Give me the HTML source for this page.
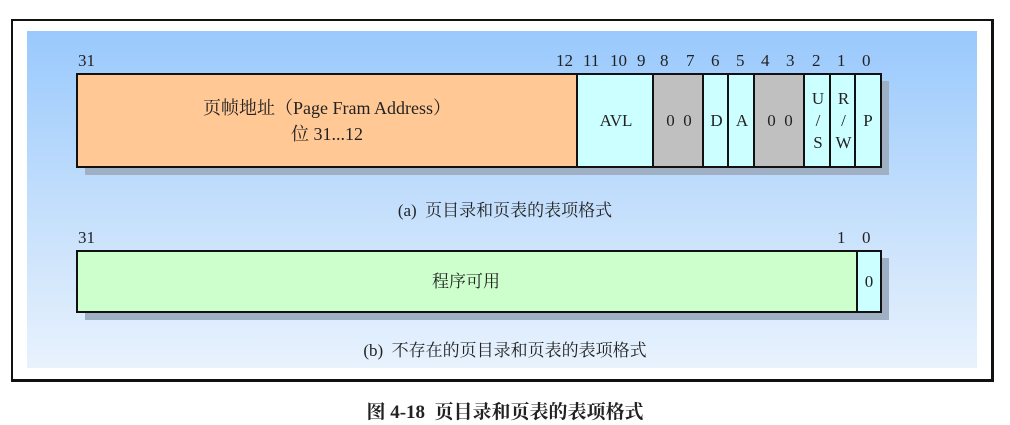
<!DOCTYPE html>
<html><head><meta charset="utf-8"><style>
body{margin:0;width:1010px;height:425px;background:#fff;position:relative;overflow:hidden;font-family:"Liberation Serif","Noto Serif CJK SC",serif;color:#222}
.a{position:absolute}
.outer{left:11px;top:19px;width:978px;height:358px;border:2px solid #111;border-right-width:3px;border-bottom-width:3px}
.panel{left:27px;top:31px;width:950px;height:337px;background:linear-gradient(#99c9fd,#c6e0fc 55%,#e8f2fd)}
.box{position:absolute;border:2px solid #111;box-sizing:border-box}
.sh{position:absolute;background:#9fb0c4}
.c{position:absolute;top:0;bottom:0;box-sizing:border-box;border-left:2px solid #111;display:flex;align-items:center;justify-content:center;font-size:17px;text-align:center;line-height:22px}
.n{position:absolute;font-size:17px;top:51px}
.cap{position:absolute;font-size:17px;width:100%;text-align:center;left:0}
</style></head><body>
<div class="a outer"></div>
<div class="a panel"></div>
<div class="sh" style="left:85px;top:81px;width:804px;height:94px"></div>
<div class="box" style="left:76px;top:73px;width:806px;height:95px;background:#ffc894">
 <div class="c" style="left:-2px;width:502px;border-left:none;font-size:18px;line-height:26px">页帧地址（Page Fram Address）<br>位 31...12</div>
 <div class="c" style="left:498px;width:78px;background:#ccffff">AVL</div>
 <div class="c" style="left:574px;width:52px;background:#c0c0c0">0&nbsp;&nbsp;0</div>
 <div class="c" style="left:624px;width:27px;background:#ccffff">D</div>
 <div class="c" style="left:649px;width:28px;background:#ccffff">A</div>
 <div class="c" style="left:675px;width:52px;background:#c0c0c0">0&nbsp;&nbsp;0</div>
 <div class="c" style="left:725px;width:28px;background:#ccffff">U<br>/<br>S</div>
 <div class="c" style="left:751px;width:27px;background:#ccffff">R<br>/<br>W</div>
 <div class="c" style="left:776px;width:26px;background:#ccffff">P</div>
</div>
<div class="n" style="left:78px">31</div>
<div class="n" style="left:556px">12</div><div class="n" style="left:583px">11</div>
<div class="n" style="left:610px">10</div><div class="n" style="left:637px">9</div>
<div class="n" style="left:660px">8</div><div class="n" style="left:686px">7</div>
<div class="n" style="left:711px">6</div><div class="n" style="left:736px">5</div>
<div class="n" style="left:761px">4</div><div class="n" style="left:786px">3</div>
<div class="n" style="left:812px">2</div><div class="n" style="left:837px">1</div>
<div class="n" style="left:862px">0</div>
<div class="cap" style="top:196px;left:0">(a)&nbsp;&nbsp;页目录和页表的表项格式</div>

<div class="n" style="left:78px;top:228px">31</div>
<div class="n" style="left:837px;top:228px">1</div>
<div class="n" style="left:862px;top:228px">0</div>
<div class="sh" style="left:85px;top:258px;width:804px;height:62px"></div>
<div class="box" style="left:76px;top:250px;width:806px;height:63px;background:#ccffcc">
 <div class="c" style="left:-2px;width:780px;border-left:none">程序可用</div>
 <div class="c" style="left:778px;width:24px;background:#ccffff">0</div>
</div>
<div class="cap" style="top:336px">(b)&nbsp;&nbsp;不存在的页目录和页表的表项格式</div>
<div class="cap" style="top:397px;font-weight:bold;font-size:19px">图 4-18&nbsp;&nbsp;页目录和页表的表项格式</div>
</body></html>
